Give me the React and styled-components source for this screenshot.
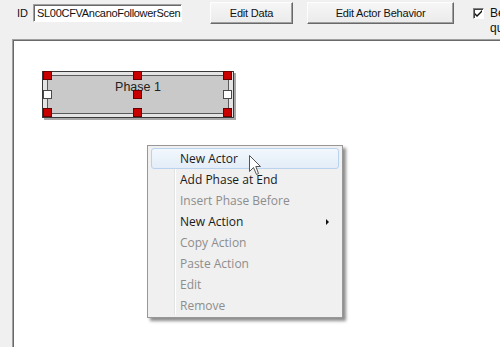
import React from "react";
import styled, { createGlobalStyle } from "styled-components";

const Global = createGlobalStyle`
  html, body { margin: 0; padding: 0; background: #f0f0f0; }
  #root { width: 500px; height: 347px; }
`;

const Window = styled.div`
  width: 500px;
  height: 347px;
  background: #f0f0f0;
  display: flex;
  flex-direction: column;
  overflow: hidden;
  position: relative;
  font-family: "Liberation Sans", Arial, sans-serif;
`;

const Toolbar = styled.div`
  height: 39px;
  flex: none;
  display: flex;
  align-items: flex-start;
  padding-left: 17px;
  box-sizing: border-box;
  white-space: nowrap;
  overflow: hidden;
  & > * { flex: none; }
`;

const Label = styled.span`
  font-size: 11px;
  color: #111;
  margin-top: 7px;
  width: 16px;
`;

const TextField = styled.div`
  width: 149px;
  height: 18px;
  margin-top: 4px;
  box-sizing: border-box;
  background: #fff;
  border-top: 1px solid #a0a0a0;
  border-left: 1px solid #a0a0a0;
  border-right: 1px solid #fff;
  border-bottom: 1px solid #fff;
  box-shadow: inset 1px 1px 0 #696969;
  padding: 2px 0 0 3px;
  font-size: 11px;
  color: #111;
  overflow: hidden;
  letter-spacing: -0.3px;
`;

const Button = styled.div`
  width: ${(p) => p.$w}px;
  height: 22px;
  margin-top: 2px;
  margin-left: ${(p) => p.$ml}px;
  box-sizing: border-box;
  background: linear-gradient(#f6f6f6, #ebebeb);
  border-top: 1px solid #fdfdfd;
  border-left: 1px solid #fdfdfd;
  border-right: 1px solid #696969;
  border-bottom: 1px solid #696969;
  box-shadow: inset -1px -1px 0 #a0a0a0;
  display: flex;
  align-items: center;
  justify-content: center;
  font-size: 11px;
  color: #111;
  letter-spacing: -0.2px;
`;

const CheckWrap = styled.div`
  display: flex;
  align-items: flex-start;
  margin-left: 19px;
  margin-top: 8px;
`;

const CheckBox = styled.div`
  width: 11px;
  height: 11px;
  flex: none;
  box-sizing: border-box;
  background: #fff;
  border-top: 1px solid #808080;
  border-left: 1px solid #808080;
  border-right: 1px solid #fff;
  border-bottom: 1px solid #fff;
  box-shadow: inset 1px 1px 0 #404040;
  display: flex;
  align-items: center;
  justify-content: center;
`;

const CheckLabel = styled.div`
  margin-left: 6px;
  margin-top: -2px;
  font-size: 12px;
  line-height: 15px;
  color: #111;
`;

const Body = styled.div`
  flex: 1;
  display: flex;
  padding-left: 12px;
  min-height: 0;
`;

const Canvas = styled.div`
  flex: 1;
  position: relative;
  background: #fff;
  border-top: 1px solid #a0a0a0;
  border-left: 1px solid #a0a0a0;
  box-shadow: inset 1px 1px 0 #696969;
`;

const PhaseNode = styled.div`
  position: absolute;
  left: ${(p) => p.$x}px;
  top: ${(p) => p.$y}px;
  width: 192px;
  height: 47px;
  box-sizing: border-box;
  border: 1px solid #3a3a3a;
  background: #e4e4e4;
  padding: 3px 4px;
  box-shadow: 2px 2px 0 #a8a8a8;
`;

const PhaseInner = styled.div`
  height: 100%;
  box-sizing: border-box;
  border: 1px solid #5a5a5a;
  background: #c9c9c9;
  display: flex;
  justify-content: center;
  padding-top: 4px;
  font-size: 12.5px;
  color: #222;
`;

const Handle = styled.div`
  position: absolute;
  width: 9px;
  height: 9px;
  box-sizing: border-box;
  background: ${(p) => (p.$white ? "#ffffff" : "#c80000")};
  border: 1px solid ${(p) => (p.$white ? "#4a4a4a" : "#6a0000")};
  left: ${(p) => p.$x};
  top: ${(p) => p.$y};
`;

const Menu = styled.div`
  position: absolute;
  left: ${(p) => p.$x}px;
  top: ${(p) => p.$y}px;
  width: 196px;
  box-sizing: border-box;
  background: #f0f0f0;
  border: 1px solid #979797;
  padding: 2px 2px 1px 2px;
  box-shadow: 3px 3px 3px rgba(0, 0, 0, 0.45);
  font-family: "Open Sans", "Noto Sans", sans-serif;
  font-size: 12px;
`;

const Gutter = styled.div`
  position: absolute;
  left: 26px;
  top: 2px;
  bottom: 2px;
  width: 1px;
  background: #e2e3e3;
  border-right: 1px solid #ffffff;
`;

const Item = styled.div`
  position: relative;
  height: 21px;
  box-sizing: border-box;
  display: flex;
  align-items: center;
  padding-left: 28px;
  border-radius: 3px;
  border: 1px solid ${(p) => (p.$hover ? "#b9d3ee" : "transparent")};
  background: ${(p) =>
    p.$hover ? "linear-gradient(#f2f7fd, #e3edf8)" : "transparent"};
  color: ${(p) => (p.$disabled ? "#8d8d8d" : "#1a1a1a")};
  margin-left: 1px;
  margin-right: 1px;
`;

const Arrow = styled.span`
  position: absolute;
  right: 9px;
  top: 7px;
  width: 0;
  height: 0;
  border-top: 3px solid transparent;
  border-bottom: 3px solid transparent;
  border-left: 3px solid #111;
`;

const Cursor = styled.svg`
  position: absolute;
  left: ${(p) => p.$x}px;
  top: ${(p) => p.$y}px;
`;

const items = [
  { label: "New Actor", hover: true },
  { label: "Add Phase at End" },
  { label: "Insert Phase Before", disabled: true },
  { label: "New Action", sub: true },
  { label: "Copy Action", disabled: true },
  { label: "Paste Action", disabled: true },
  { label: "Edit", disabled: true },
  { label: "Remove", disabled: true },
];

const handles = [
  { x: "0px", y: "-1px" },
  { x: "calc(50% - 5px)", y: "-1px" },
  { x: "calc(100% - 10px)", y: "-1px" },
  { x: "0px", y: "calc(50% - 5px)", white: true },
  { x: "calc(50% - 5px)", y: "calc(50% - 5px)" },
  { x: "calc(100% - 10px)", y: "calc(50% - 5px)", white: true },
  { x: "0px", y: "calc(100% - 9px)" },
  { x: "calc(50% - 5px)", y: "calc(100% - 9px)" },
  { x: "calc(100% - 10px)", y: "calc(100% - 9px)" },
];

export default function App() {
  return (
    <>
      <Global />
      <Window>
        <Toolbar>
          <Label>ID</Label>
          <TextField>SL00CFVAncanoFollowerScen</TextField>
          <Button $w={83} $ml={28}>Edit Data</Button>
          <Button $w={147} $ml={14}>Edit Actor Behavior</Button>
          <CheckWrap>
            <CheckBox>
              <svg width="7" height="7" viewBox="0 0 7 7">
                <path d="M0 3 L2 5 L7 0 L7 2 L2 7 L0 5 Z" fill="#111" />
              </svg>
            </CheckBox>
            <CheckLabel>
              Begin on
              <br />
              quest start
            </CheckLabel>
          </CheckWrap>
        </Toolbar>
        <Body>
          <Canvas>
            <PhaseNode $x={29} $y={31}>
              <PhaseInner>Phase 1</PhaseInner>
              {handles.map((h, i) => (
                <Handle key={i} $x={h.x} $y={h.y} $white={h.white} />
              ))}
            </PhaseNode>
          </Canvas>
        </Body>
        <Menu $x={147} $y={145}>
          <Gutter />
          {items.map((it) => (
            <Item key={it.label} $hover={it.hover} $disabled={it.disabled}>
              {it.label}
              {it.sub && <Arrow />}
            </Item>
          ))}
        </Menu>
        <Cursor $x={249} $y={155} width="13" height="21" viewBox="0 0 13 21">
          <path
            d="M0.5 0.5 L0.5 16.5 L4.5 12.5 L7.5 19.5 L9.5 18.5 L6.8 11.5 L11.5 11.5 Z"
            fill="#fff"
            stroke="#555"
            strokeWidth="1"
            strokeLinejoin="round"
          />
        </Cursor>
      </Window>
    </>
  );
}
